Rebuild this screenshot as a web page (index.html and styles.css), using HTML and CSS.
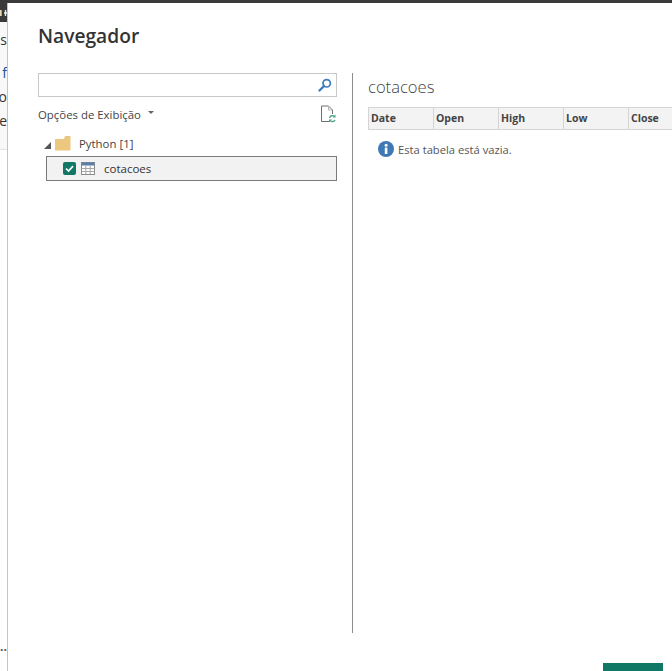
FILE: index.html
```html
<!DOCTYPE html>
<html lang="pt">
<head>
<meta charset="UTF-8">
<meta name="viewport" content="width=device-width, initial-scale=1.0">
<title>Navegador</title>
<link rel="stylesheet" href="styles.css">
</head>
<body>
<div class="top-bar"></div>
<div class="window">
    <!-- sliver of the app behind the dialog -->
    <div class="behind">
        <div class="behind-dark">
            <svg width="7" height="19" viewBox="0 0 7 19">
                <rect x="0" y="7" width="1" height="6" fill="#e8d8b0"/>
                <rect x="1" y="7" width="1" height="6" fill="#7fb0d8"/>
                <path d="M4 10 H7 M5.5 7 V13" stroke="#e6f0fa" stroke-width="1.4"/>
            </svg>
        </div>
        <div class="behind-panel">
            <div class="behind-line one">s</div>
            <div class="behind-line two"><span class="link">e f</span></div>
            <div class="behind-line three">o</div>
            <div class="behind-line four">ve</div>
        </div>
        <div class="behind-dots">...</div>
    </div>

    <div class="dialog">
        <h1>Navegador</h1>
        <div class="panes">
            <div class="left-pane">
                <div class="search-box">
                    <svg class="search-icon" width="14" height="14" viewBox="0 0 14 14">
                        <circle cx="8.7" cy="5.3" r="3.7" fill="none" stroke="#3f7cbc" stroke-width="1.7"/>
                        <path d="M6 8 L1.5 12.5" stroke="#3f7cbc" stroke-width="2.4" stroke-linecap="round"/>
                    </svg>
                </div>
                <div class="options-row">
                    <span class="options">Opções de Exibição</span>
                    <span class="caret"></span>
                    <svg class="refresh-icon" width="16" height="18" viewBox="0 0 16 18">
                        <path d="M9.5 16.5 H1.5 V1 H8.5 L12.5 5 V9" fill="none" stroke="#707070"/>
                        <path d="M8.5 1 V5 H12.5" fill="none" stroke="#b5b5b5"/>
                        <path d="M9.5 13 A3 3 0 0 1 14.5 11.5" fill="none" stroke="#4aa383" stroke-width="1.4"/>
                        <path d="M15 15 A3 3 0 0 1 10.5 16" fill="none" stroke="#4aa383" stroke-width="1.4"/>
                        <path d="M15.5 9.5 V12.5 H12.5 Z M9 17.5 V14.5 H12 Z" fill="#4aa383"/>
                    </svg>
                </div>
                <div class="tree-folder">
                    <span class="arrow"></span>
                    <svg class="folder-icon" width="16" height="15" viewBox="0 0 16 15">
                        <path d="M0 3 H9 L10 0 H15.5 V14.5 H0 Z" fill="#ecc77f"/>
                    </svg>
                    <span>Python [1]</span>
                </div>
                <div class="tree-item">
                    <span class="check">
                        <svg width="13" height="13" viewBox="0 0 13 13">
                            <path d="M3 6.5 L5.5 9 L10 4.2" fill="none" stroke="#fff" stroke-width="1.7"/>
                        </svg>
                    </span>
                    <svg class="table-icon" width="14" height="13" viewBox="0 0 14 13">
                        <rect x="0.5" y="0.5" width="13" height="12" fill="#fff" stroke="#8a8a8a"/>
                        <rect x="0.5" y="0.5" width="13" height="3" fill="#5c7fa8"/>
                        <path d="M0.5 6.5 H13.5 M0.5 9.5 H13.5 M4.8 3.5 V12.5 M9.2 3.5 V12.5" stroke="#a8a8a8" fill="none"/>
                    </svg>
                    <span class="item-name">cotacoes</span>
                </div>
            </div>
            <div class="right-pane">
                <h2>cotacoes</h2>
                <div class="table-head">
                    <div class="col">Date</div>
                    <div class="col">Open</div>
                    <div class="col">High</div>
                    <div class="col">Low</div>
                    <div class="col">Close</div>
                    <div class="col"></div>
                </div>
                <div class="empty-msg">
                    <svg width="16" height="16" viewBox="0 0 16 16">
                        <circle cx="8" cy="8" r="8" fill="#3f79b5"/>
                        <rect x="6.8" y="6.6" width="2.6" height="6.4" fill="#fff"/>
                        <circle cx="8.1" cy="4.2" r="1.5" fill="#fff"/>
                    </svg>
                    <span>Esta tabela está vazia.</span>
                </div>
            </div>
        </div>
        <div class="footer">
            <button class="primary">Carregar</button>
        </div>
    </div>
</div>
</body>
</html>
```

FILE: styles.css
```css
html, body {
    height: 671px;
    overflow: hidden;
}
body {
    margin: 0;
    background-color: #fff;
    font-family: "Open Sans", "Noto Sans", Arial, sans-serif;
    color: #333;
    display: flex;
    flex-direction: column;
}
.top-bar {
    height: 3px;
    flex: none;
    background-color: #3a3a3a;
}
.window {
    flex: 1;
    display: flex;
    min-height: 0;
}

/* app behind the dialog */
.behind {
    width: 7px;
    flex: none;
    overflow: hidden;
    display: flex;
    flex-direction: column;
    background-color: #fff;
    font-size: 14px;
    color: #333;
}
.behind-dark {
    height: 19px;
    flex: none;
    background-color: #3a3a3a;
}
.behind-dark svg {
    display: block;
}
.behind-panel {
    height: 127px;
    flex: none;
    background-color: #f8f8f8;
    border-bottom: 1px solid #e2e2e2;
}
.behind-line {
    height: 24px;
    line-height: 24px;
    white-space: nowrap;
    text-align: right;
    margin-left: -20px;
}
.behind-line.one {
    margin-top: 6px;
    margin-bottom: 9px;
}
.link {
    color: #1a4f9a;
}
.behind-dots {
    margin-top: 492px;
    line-height: 10px;
    font-weight: bold;
    font-size: 12px;
    color: #555;
}

/* dialog */
.dialog {
    flex: 1;
    min-width: 0;
    border-left: 1px solid #c4c4c4;
    padding-left: 30px;
    display: flex;
    flex-direction: column;
    overflow: hidden;
}
h1 {
    margin: 0;
    height: 70px;
    flex: none;
    line-height: 66px;
    font-size: 19.2px;
    font-weight: 600;
    color: #333;
}
.panes {
    display: flex;
    height: 560px;
    flex: none;
}
.left-pane {
    width: 299px;
    flex: none;
    margin-right: 15px;
}
.search-box {
    height: 24px;
    box-sizing: border-box;
    border: 1px solid #c8c8c8;
    display: flex;
    align-items: center;
    justify-content: flex-end;
    padding-right: 4px;
}
.options-row {
    height: 34px;
    display: flex;
    align-items: center;
    font-size: 11.4px;
    color: #444;
}
.caret {
    width: 0;
    height: 0;
    margin: 0 0 3px 7px;
    border-left: 3px solid transparent;
    border-right: 3px solid transparent;
    border-top: 3px solid #666;
}
.refresh-icon {
    margin-left: auto;
    margin-right: 1px;
}
.tree-folder {
    height: 25px;
    margin-left: 6px;
    display: flex;
    align-items: center;
    font-size: 11.4px;
    color: #444;
}
.arrow {
    width: 0;
    height: 0;
    border-bottom: 7px solid #555;
    border-left: 7px solid transparent;
    margin-right: 4px;
    margin-top: 3px;
}
.folder-icon {
    margin-right: 8px;
}
.tree-item {
    height: 25px;
    box-sizing: border-box;
    margin-left: 8px;
    border: 1px solid #7a7a7a;
    background-color: #f2f2f2;
    display: flex;
    align-items: center;
    padding-left: 16px;
    font-size: 11.5px;
    color: #333;
}
.check {
    width: 13px;
    height: 13px;
    border-radius: 2px;
    background-color: #117865;
    display: flex;
    margin-right: 5px;
}
.table-icon {
    margin-right: 9px;
}
.right-pane {
    flex: 1;
    min-width: 0;
    border-left: 1px solid #8c8c8c;
    padding-left: 15px;
    overflow: hidden;
}
h2 {
    margin: 0;
    height: 34px;
    line-height: 28px;
    font-size: 16.6px;
    font-weight: 300;
    color: #444;
}
.table-head {
    display: flex;
    width: 500px;
    height: 23px;
    box-sizing: border-box;
    border: 1px solid #d4d4d4;
    border-right: none;
    background-color: #f3f3f3;
}
.col {
    width: 65px;
    flex: none;
    box-sizing: border-box;
    border-right: 1px solid #d4d4d4;
    padding-left: 2px;
    font-size: 10.5px;
    font-weight: 700;
    line-height: 20px;
    color: #444;
}
.empty-msg {
    display: flex;
    align-items: center;
    gap: 4px;
    margin: 11px 0 0 10px;
    font-size: 11.2px;
    color: #555;
}
.footer {
    flex: none;
    padding-top: 30px;
    padding-right: 9px;
    display: flex;
    justify-content: flex-end;
}
.primary {
    width: 60px;
    height: 28px;
    flex: none;
    border: none;
    padding: 0 0 4px;
    background-color: #117865;
    color: #fff;
    font-family: inherit;
    font-size: 12px;
}
```
